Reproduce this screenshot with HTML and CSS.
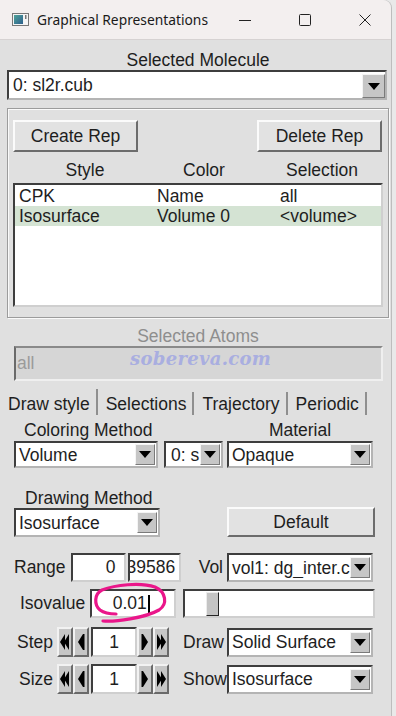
FILE: index.html
```html
<!DOCTYPE html>
<html>
<head>
    <title>Graphical Representations</title>
    <meta charset="UTF-8">
    <link rel="stylesheet" href="styles.css">
</head>
<body>
<div class="window">
    <div class="titlebar">
        <svg class="app-icon" width="17" height="13" viewBox="0 0 17 13">
            <defs>
                <linearGradient id="ig" x1="0" y1="0" x2="1" y2="1">
                    <stop offset="0" stop-color="#4fa39a"/>
                    <stop offset="1" stop-color="#2d5f8c"/>
                </linearGradient>
            </defs>
            <rect x="0.5" y="0.5" width="16" height="12" fill="#f4f4f4" stroke="#777"/>
            <rect x="2" y="2" width="9" height="9" fill="url(#ig)"/>
            <rect x="13" y="2" width="1.5" height="4" fill="#777"/>
        </svg>
        <span class="title">Graphical Representations</span>
        <div class="controls">
            <svg width="14" height="14" viewBox="0 0 14 14"><path d="M1 7.5h12" stroke="#222" stroke-width="1"/></svg>
            <svg width="14" height="14" viewBox="0 0 14 14"><rect x="1.5" y="1.5" width="11" height="11" rx="1" fill="none" stroke="#222" stroke-width="1"/></svg>
            <svg width="14" height="14" viewBox="0 0 14 14"><path d="M1.5 1.5l11 11M12.5 1.5l-11 11" stroke="#222" stroke-width="1"/></svg>
        </div>
    </div>

    <div class="content">
        <div class="heading">Selected Molecule</div>
        <div class="menu mol"><span class="value">0: sl2r.cub</span><span class="arrow"></span></div>

        <div class="group">
            <div class="rep-buttons">
                <button class="btn rep">Create Rep</button>
                <button class="btn rep">Delete Rep</button>
            </div>
            <div class="rep-head"><span>Style</span><span>Color</span><span>Selection</span></div>
            <div class="listbox">
                <div class="rep-row"><span>CPK</span><span>Name</span><span>all</span></div>
                <div class="rep-row selected"><span>Isosurface</span><span>Volume 0</span><span>&lt;volume&gt;</span></div>
            </div>
        </div>

        <div class="heading dim">Selected Atoms</div>
        <div class="atoms">all<span class="watermark">sobereva.com</span></div>

        <div class="tabs">
            <div class="tab active">Draw style</div>
            <div class="tab">Selections</div>
            <div class="tab">Trajectory</div>
            <div class="tab">Periodic</div>
        </div>

        <div class="panel">
            <div class="label-row">
                <span class="coloring">Coloring Method</span>
                <span class="material">Material</span>
            </div>
            <div class="select-row">
                <div class="menu color-menu"><span class="value">Volume</span><span class="arrow"></span></div>
                <div class="menu vol-menu"><span class="value">0: s</span><span class="arrow"></span></div>
                <div class="menu wide-menu"><span class="value">Opaque</span><span class="arrow"></span></div>
            </div>

            <div class="draw-row">
                <div class="draw-col">
                    <div class="draw-label">Drawing Method</div>
                    <div class="menu iso-menu"><span class="value">Isosurface</span><span class="arrow"></span></div>
                </div>
                <button class="btn default">Default</button>
            </div>

            <div class="ctl-row range-row">
                <div class="left">
                    <span class="lbl">Range</span>
                    <div class="entry range-min">0</div>
                    <div class="entry range-max"><span>39586</span></div>
                </div>
                <span class="side-lbl">Vol</span>
                <div class="menu wide-menu"><span class="value">vol1: dg_inter.c</span><span class="arrow"></span></div>
            </div>

            <div class="ctl-row iso-row">
                <div class="left">
                    <span class="lbl iso-lbl">Isovalue</span>
                    <div class="entry iso-entry">0.01<span class="cursor"></span></div>
                </div>
                <div class="scale"><span class="thumb"></span></div>
            </div>

            <div class="ctl-row spin-row">
                <div class="left">
                    <span class="lbl spin-lbl">Step</span>
                    <span class="spin"><svg width="12" height="26" viewBox="0 0 12 26"><path d="M1 13L6 5V21Z M5 13L10 5V21Z" fill="#000"/></svg></span>
                    <span class="spin"><svg width="12" height="26" viewBox="0 0 12 26"><path d="M3 13L8 5V21Z" fill="#000"/><rect x="8" y="5" width="1.5" height="16" fill="#000"/></svg></span>
                    <div class="entry spin-entry">1</div>
                    <span class="spin"><svg width="12" height="26" viewBox="0 0 12 26"><rect x="2.5" y="5" width="1.5" height="16" fill="#000"/><path d="M4 5L9 13L4 21Z" fill="#000"/></svg></span>
                    <span class="spin"><svg width="12" height="26" viewBox="0 0 12 26"><path d="M2 5L7 13L2 21Z M6 5L11 13L6 21Z" fill="#000"/></svg></span>
                </div>
                <span class="side-lbl">Draw</span>
                <div class="menu wide-menu"><span class="value">Solid Surface</span><span class="arrow"></span></div>
            </div>

            <div class="ctl-row spin-row size-row">
                <div class="left">
                    <span class="lbl spin-lbl">Size</span>
                    <span class="spin"><svg width="12" height="26" viewBox="0 0 12 26"><path d="M1 13L6 5V21Z M5 13L10 5V21Z" fill="#000"/></svg></span>
                    <span class="spin"><svg width="12" height="26" viewBox="0 0 12 26"><path d="M3 13L8 5V21Z" fill="#000"/><rect x="8" y="5" width="1.5" height="16" fill="#000"/></svg></span>
                    <div class="entry spin-entry">1</div>
                    <span class="spin"><svg width="12" height="26" viewBox="0 0 12 26"><rect x="2.5" y="5" width="1.5" height="16" fill="#000"/><path d="M4 5L9 13L4 21Z" fill="#000"/></svg></span>
                    <span class="spin"><svg width="12" height="26" viewBox="0 0 12 26"><path d="M2 5L7 13L2 21Z M6 5L11 13L6 21Z" fill="#000"/></svg></span>
                </div>
                <span class="side-lbl">Show</span>
                <div class="menu wide-menu"><span class="value">Isosurface</span><span class="arrow"></span></div>
            </div>
        </div>
    </div>

    <!-- hand drawn mark around the isovalue -->
    <svg class="mark" width="396" height="716" viewBox="0 0 396 716">
        <path d="M103 621 C115 622 145 618 159 610 C168 604 166 592 155 587 C140 582 115 585 102 590 C94 594 94 605 100 610 C104 613 110 614 116 614" fill="none" stroke="#ea168a" stroke-width="3.2" stroke-linecap="round"/>
    </svg>
</div>
</body>
</html>
```

FILE: styles.css
```css
* {
    box-sizing: border-box;
}
body {
    margin: 0;
    width: 396px;
    height: 716px;
    overflow: hidden;
    background: #e9e9e9;
    font-family: 'Liberation Sans', Arial, sans-serif;
    font-size: 17.5px;
    color: #1e1e1e;
}
.window {
    position: relative;
    width: 391px;
    height: 716px;
    background: #e0e0e0;
    border-top-right-radius: 8px;
    box-shadow: 1px 0 0 #bdbdbd;
    overflow: hidden;
}

/* title bar */
.titlebar {
    display: flex;
    align-items: center;
    height: 40px;
    padding-left: 12px;
    background: #f3efef;
    border-bottom: 1px solid #d6d2d2;
}
.app-icon {
    flex: none;
}
.title {
    margin-left: 8px;
    font-family: 'Noto Sans', sans-serif;
    font-size: 13.8px;
    color: #1a1a1a;
}
.controls {
    display: flex;
    margin-left: auto;
    gap: 46px;
    padding-right: 19px;
}

/* main area */
.content {
    padding: 0 2px 0 7px;
}
.heading {
    margin-top: 10px;
    line-height: 20px;
    text-align: center;
}
.heading.dim {
    margin-top: 8px;
    color: #8e8e8e;
}
.menu {
    display: flex;
    align-items: center;
    height: 27px;
    background: #fff;
    border: 2px solid;
    border-color: #3e3e3e #b4b4b4 #b4b4b4 #3e3e3e;
    overflow: hidden;
    white-space: nowrap;
}
.menu .value {
    flex: 1;
    padding-left: 3px;
    line-height: 20px;
    overflow: hidden;
}
.arrow {
    flex: none;
    display: flex;
    align-items: center;
    justify-content: center;
    width: 20px;
    height: 21px;
    margin-right: 1px;
    background: #c6c6c6;
    border: 1px solid;
    border-color: #f4f4f4 #7a7a7a #7a7a7a #f4f4f4;
}
.arrow::after {
    content: "";
    border-left: 6.5px solid transparent;
    border-right: 6.5px solid transparent;
    border-top: 7px solid #000;
}
.menu.mol {
    height: 30px;
    width: 380px;
}
.menu.mol .value {
    padding-left: 4px;
}
.menu.mol .arrow {
    width: 23px;
    height: 24px;
    margin: 2px 0 0 0;
}

.btn {
    font: inherit;
    color: inherit;
    background: #e2e2e2;
    border: 2px solid;
    border-color: #fbfbfb #6c6c6c #6c6c6c #fbfbfb;
    padding: 0;
}

/* reps */
.group {
    width: 382px;
    margin-top: 8px;
    padding: 11px 6px 10px 5px;
    border: 1px solid #9c9c9c;
    box-shadow: inset 1px 1px 0 #fafafa, 1px 1px 0 #fafafa;
}
.rep-buttons {
    display: flex;
    justify-content: space-between;
}
.btn.rep {
    width: 125px;
    height: 32px;
}
.rep-head {
    display: grid;
    grid-template-columns: 144px 94px 142px;
    margin-top: 8px;
    line-height: 20px;
    text-align: center;
}
.listbox {
    height: 124px;
    margin-top: 3px;
    margin-right: -1px;
    padding-top: 1px;
    background: #fff;
    border: 2px solid;
    border-color: #3e3e3e #cfcfcf #cfcfcf #3e3e3e;
}
.rep-row {
    display: grid;
    grid-template-columns: 138px 123px 1fr;
    height: 20px;
    line-height: 20px;
    padding-left: 4px;
}
.rep-row.selected {
    background: #d4e3d3;
}

/* selected atoms */
.atoms {
    position: relative;
    display: flex;
    align-items: center;
    width: 369px;
    height: 35px;
    margin-left: 7px;
    padding-left: 1px;
    background: #d6d6d6;
    border: 2px solid;
    border-color: #8a8a8a #efefef #efefef #6a6a6a;
    color: #9b9b9b;
}
.watermark {
    position: absolute;
    left: 114px;
    top: 2px;
    font-family: 'DejaVu Serif', serif;
    font-weight: bold;
    font-style: italic;
    font-size: 18px;
    line-height: 18px;
    color: #a9aee0;
    letter-spacing: 0.3px;
}

/* tabs */
.tabs {
    display: flex;
    align-items: flex-end;
    height: 27px;
    margin-top: 7px;
}
.tab {
    height: 23px;
    padding: 2px 6px 0 8px;
    line-height: 20px;
    border-right: 2px solid #8f8f8f;
}
.tab.active {
    height: 26px;
    padding-top: 5px;
    padding-left: 1px;
}

/* draw style panel */
.panel {
    padding: 5px 0 0 7px;
}
.label-row {
    display: grid;
    grid-template-columns: 213px 146px;
    line-height: 20px;
}
.coloring {
    padding-left: 10px;
}
.material {
    text-align: center;
}
.select-row {
    display: flex;
    margin-top: 1px;
}
.color-menu {
    width: 144px;
}
.vol-menu {
    width: 59px;
    margin-left: 6px;
}
.vol-menu .value {
    padding-left: 5px;
}
.wide-menu {
    width: 146px;
    margin-left: 4px;
}
.draw-row {
    display: flex;
    align-items: flex-end;
    margin-top: 20px;
}
.draw-col {
    width: 146px;
}
.draw-label {
    padding-left: 11px;
    line-height: 20px;
}
.iso-menu {
    height: 29px;
}
.btn.default {
    width: 148px;
    height: 30px;
    margin-left: 67px;
}

.ctl-row {
    display: flex;
    align-items: center;
    height: 29px;
}
.ctl-row .wide-menu {
    height: 29px;
}
.range-row {
    margin-top: 16px;
}
.iso-row {
    margin-top: 7px;
}
.spin-row {
    margin-top: 9px;
    height: 30px;
}
.size-row {
    margin-top: 7px;
}
.left {
    display: flex;
    align-items: center;
    width: 169px;
    height: 100%;
}
.lbl {
    margin-right: 5px;
}
.iso-lbl {
    margin-left: 6px;
}
.spin-lbl {
    width: 39px;
    margin-right: 4px;
    text-align: right;
}
.side-lbl {
    width: 40px;
    text-align: right;
    white-space: nowrap;
}
.entry {
    display: flex;
    align-items: center;
    height: 100%;
    background: #fff;
    border: 2px solid;
    border-color: #3e3e3e #cfcfcf #cfcfcf #3e3e3e;
    overflow: hidden;
    white-space: nowrap;
}
.range-min {
    width: 55px;
    justify-content: flex-end;
    padding-right: 8px;
}
.range-max {
    width: 53px;
    margin-left: 2px;
}
.range-max span {
    margin-left: -3px;
}
.iso-entry {
    width: 86px;
    justify-content: center;
    padding-right: 4px;
}
.cursor {
    width: 2px;
    height: 18px;
    margin-left: 1px;
    background: #000;
}
.scale {
    position: relative;
    width: 192px;
    height: 100%;
    background: #fff;
    border: 2px solid;
    border-color: #3e3e3e #cfcfcf #cfcfcf #3e3e3e;
}
.thumb {
    position: absolute;
    left: 21px;
    top: 1px;
    bottom: 0;
    width: 13px;
    background: #c4c4c4;
    border: 1px solid;
    border-color: #ececec #262626 #262626 #ececec;
}
.spin {
    display: flex;
    align-items: center;
    justify-content: center;
    width: 16px;
    height: 30px;
    background: #c6c6c6;
    border: 2px solid;
    border-color: #f2f2f2 #6a6a6a #6a6a6a #f2f2f2;
}
.spin-entry {
    width: 46px;
    margin: 0 0 0 2px;
    justify-content: center;
}

/* annotation on top of the window */
.mark {
    position: absolute;
    left: 0;
    top: 0;
    pointer-events: none;
}
```
